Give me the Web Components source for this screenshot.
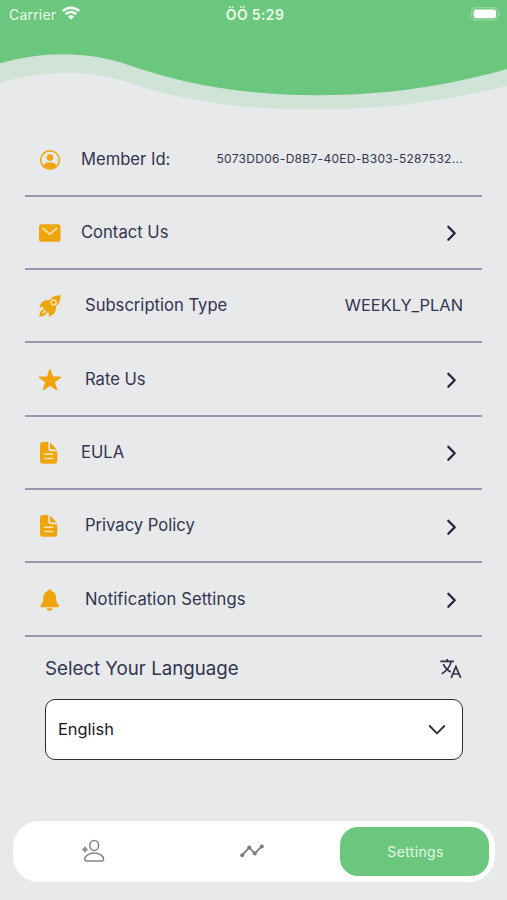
<!DOCTYPE html>
<html lang="en">
<head>
<meta charset="utf-8">
<title>Settings</title>
<style>
html,body{margin:0;height:100%}
body{background:#e7e9eb;font-family:Inter,"Liberation Sans",sans-serif;color:#34344e;overflow:hidden}
</style>
</head>
<body>
<settings-screen></settings-screen>
<script>
const icons = {
  user: `<svg width="22" height="22" viewBox="0 0 22 22"><circle cx="11" cy="11" r="9.3" fill="none" stroke="#efa50b" stroke-width="1.5"/><circle cx="11" cy="8.6" r="3.3" fill="#efa50b"/><path d="M4.3 16.7c1.4-2.4 3.9-3.4 6.7-3.4s5.300 1 6.700 3.400A9 9 0 0 1 4.300 16.700Z" fill="#efa50b"/></svg>`,
  mail: `<svg width="22" height="22" viewBox="0 0 22 22"><rect x="0" y="2.200" width="21.500" height="17.600" rx="2.600" fill="#efa50b"/><path d="M3.800 6.300 10.800 12.100 17.800 6.300" fill="none" stroke="#f8e8c4" stroke-width="1.500" stroke-linecap="round" stroke-linejoin="round"/></svg>`,
  rocket: `<svg width="22" height="22" viewBox="0 0 22 22"><path d="M21.600.3C17 .2 13.400 1.600 10.600 5 7.400 4.800 4.800 5.400 3 7.300 1.800 8.600.8 10.500.3 12.300L4.400 11.900 4 13.400 8.500 17.900 10 17.600 9.600 21.700C11.500 21.200 13.400 20.200 14.600 19 16.600 17 17.100 14.600 17 11.300 20.400 8.500 21.700 5 21.600.3Z" fill="#efa50b"/><circle cx="14.600" cy="7.400" r="2.500" fill="#efa50b" stroke="#f4ead0" stroke-width="1.300"/><path d="M3.700 14.400C1.600 14.800.7 17.300.3 21.700 4.700 21.300 7.200 20.400 7.600 18.300L5.900 16.600C5.500 18.200 4.500 18.600 2.900 19.100 3.400 17.500 3.800 16.500 5.400 16.100Z" fill="#efa50b"/></svg>`,
  star: `<svg width="24" height="24" viewBox="0 0 24 24"><path d="M12 1.500 14.700 9.200H22.600L16.300 14 18.500 21.700 12 17.100 5.500 21.700 7.700 14 1.400 9.200H9.300Z" fill="#efa50b" stroke="#efa50b" stroke-width="1.200" stroke-linejoin="round"/></svg>`,
  doc: `<svg width="20" height="22" viewBox="0 0 20 22"><path d="M3 0H8.300V6.200A3 3 0 0 0 11.300 9.200H17.300V18.700A3 3 0 0 1 14.300 21.700H3A3 3 0 0 1 0 18.700V3A3 3 0 0 1 3 0ZM10 .5 16.900 7.500H11.500A1.500 1.500 0 0 1 10 6Z" fill="#efa50b"/><path d="M4.800 12.300H12.800M4.800 16.500H12.800" stroke="#f9e6bd" stroke-width="1.500" stroke-linecap="round"/></svg>`,
  bell: `<svg width="20" height="22" viewBox="0 0 20 22"><path d="M9.700.3C8.800.3 8.400.9 8.200 1.700 5 2.500 3.300 5 3.300 8.600 3.300 13 2.400 14.200.8 15.900-.1 17.100.4 18.200 1.800 18.200H17.600C19 18.200 19.500 17.100 18.600 15.900 17 14.200 16.100 13 16.100 8.600 16.100 5 14.400 2.500 11.200 1.700 11 .9 10.600.3 9.700.3ZM6.600 19.200H12.800C12.300 20.900 11.200 21.700 9.700 21.700S7.100 20.900 6.600 19.200Z" fill="#efa50b"/></svg>`,
  chevron: `<svg width="12" height="18" viewBox="0 0 12 18"><path d="M2.300 2.700 8.700 9.200 2.300 15.700" fill="none" stroke="#24223c" stroke-width="2.300" stroke-linecap="round" stroke-linejoin="round"/></svg>`
};

function define(name, render) {
  customElements.define(name, class extends HTMLElement {
    constructor() { super(); this.attachShadow({mode: "open"}); }
    connectedCallback() { this.shadowRoot.innerHTML = render(this); }
  });
}

define("status-bar", () => `<style>
:host{display:grid;grid-template-columns:1fr auto 1fr;align-items:center;height:28px;padding:0 6px 0 9px;color:#e9fbe9;font-size:14px;box-sizing:border-box}
.left{display:flex;align-items:center;gap:6px;letter-spacing:.2px}
.time{font-weight:600;letter-spacing:.35px}
.right{justify-self:end;display:flex}
svg{display:block}
.left svg{margin-top:-3px}
.right svg{margin-top:-1px}
</style>
<div class="left"><span>Carrier</span><svg width="18" height="14" viewBox="0 0 18 14"><g fill="none" stroke="#f4fff4" stroke-width="2.500"><path d="M.9 5.200A11.500 11.500 0 0 1 17.100 5.200"/><path d="M3.700 8.200A7.500 7.500 0 0 1 14.300 8.200"/></g><path d="M9 13.800 5.900 10.600A4.500 4.500 0 0 1 12.100 10.600Z" fill="#f4fff4"/></svg></div>
<div class="time">ÖÖ 5:29</div>
<div class="right"><svg width="30" height="14" viewBox="0 0 30 14"><rect x=".8" y=".8" width="25.800" height="12.200" rx="3.800" fill="none" stroke="#a0dba9" stroke-width="1.100"/><rect x="2.600" y="2.500" width="22.400" height="8.800" rx="2.200" fill="#fff"/><path d="M27.900 5A2.200 2.200 0 0 1 27.900 8.800Z" fill="#a0dba9"/></svg></div>`);

define("wave-header", () => `<style>
:host{display:grid;height:123.400px;align-items:start}
svg,slot{grid-area:1/1}
svg,slot{display:block}
</style>
<svg width="507" height="122" viewBox="0 0 507 122"><path d="M0 0V83C45 70 88 69 130 83 180 100 240 109.500 310 109.500 390 109.500 450 100 507 86V0Z" fill="#cfe3d6"/><path d="M0 0V63.300C45 51 88 51 130 65.500 180 83 240 95.200 318 95.200 390 95.200 450 85 507 69V0Z" fill="#6bc77e"/></svg>
<slot></slot>`);

define("setting-row", el => `<style>
:host{display:flex;align-items:center;box-sizing:border-box;height:73.330px;margin:0 25px;padding:0 19px 1px 12px;border-bottom:2px solid #9696b0;font-size:16.600px}
.icon{width:26px;height:26px;display:flex;align-items:center;justify-content:center;flex:none;margin-top:2px}
.label{margin-left:${el.hasAttribute("wide") ? 22 : 18}px;flex:1;white-space:nowrap}
.end{display:flex;align-items:center;white-space:nowrap}
svg{display:block}
.go{margin-right:5px;margin-top:3px}
</style>
<span class="icon">${icons[el.getAttribute("icon")]}</span>
<span class="label"><slot></slot></span>
<span class="end">${el.hasAttribute("link") ? `<span class="go">${icons.chevron}</span>` : `<slot name="value"></slot>`}</span>`);

define("language-select", () => `<style>
:host{display:block;margin:0 44px 0 45px}
.head{display:flex;align-items:center;justify-content:space-between;height:62.300px;font-size:18.700px;padding-top:1px;box-sizing:border-box}
.box{display:flex;align-items:center;justify-content:space-between;box-sizing:border-box;height:61px;border:1.500px solid #2e2e32;border-radius:10px;background:#fff;padding:0 16px 0 12px;color:#17171a;font-size:16.400px}
svg{display:block;margin-top:1px}
</style>
<div class="head"><span><slot name="label"></slot></span><svg width="23" height="22" viewBox="0 0 23 22" fill="none" stroke="#33334c" stroke-width="1.700"><path d="M.4 3.400H14M7.200 1V3.400M11.200 3.600C10 8.600 6.500 12.800 1.700 15.900M3.400 6.200C4.700 9.300 7.400 12.400 10.800 14.100M11.200 19.800 15.900 8.700 20.700 19.800M12.800 16H19"/></svg></div>
<div class="box"><slot></slot><svg width="18" height="12" viewBox="0 0 18 12"><path d="M1.700 2 9 9.300 16.300 2" fill="none" stroke="#2a2a2e" stroke-width="1.800" stroke-linecap="round" stroke-linejoin="round"/></svg></div>`);

define("tab-bar", () => `<style>
:host{display:flex;box-sizing:border-box;width:482px;height:61px;margin:61px 0 0 13px;padding:6px 6px 6px 0;background:#fff;border-radius:26px;align-items:center}
.tab{flex:1;display:flex;justify-content:center}
.active{flex:none;margin-left:8px;width:149px;height:49px;border-radius:18px;background:#6bc77e;display:flex;align-items:center;justify-content:center;color:#e6f9e8;font-size:14px;letter-spacing:.35px;padding-left:2px;box-sizing:border-box}
svg{display:block}
</style>
<span class="tab"><svg width="24" height="24" viewBox="0 0 24 24" fill="none" stroke="#858585" stroke-width="1.500"><ellipse cx="13.200" cy="6.400" rx="4.400" ry="5"/><path d="M3.800 20.300C3.800 16.500 8 14.100 13.200 14.100S22.600 16.500 22.600 20.300C22.600 21.500 22.100 22 21.200 22H5.200C4.300 22 3.800 21.500 3.800 20.300Z"/><path d="M1.200 10.500H6.600M3.900 7.800V13.200" stroke-width="1.800"/></svg></span>
<span class="tab"><svg width="24" height="16" viewBox="0 0 24 16"><path d="M2.200 12.200 9.200 4.600 14.800 10.400 21.800 3.400" fill="none" stroke="#7b7b7b" stroke-width="1.700"/><g fill="#7b7b7b"><circle cx="2.200" cy="12.200" r="2"/><circle cx="9.200" cy="4.600" r="2"/><circle cx="14.800" cy="10.400" r="2"/><circle cx="21.800" cy="3.400" r="2"/></g></svg></span>
<span class="active"><slot></slot></span>`);

define("settings-screen", () => `<style>
:host{display:flex;flex-direction:column;width:507px;height:900px}
.id{font-size:12px;letter-spacing:.3px}
.plan{font-size:16.400px}
.spaced{letter-spacing:.1px}
</style>
<wave-header><status-bar></status-bar></wave-header>
<setting-row icon="user">Member Id:<span slot="value" class="id">5073DD06-D8B7-40ED-B303-5287532...</span></setting-row>
<setting-row icon="mail" link>Contact Us</setting-row>
<setting-row icon="rocket" wide>Subscription Type<span slot="value" class="plan">WEEKLY_PLAN</span></setting-row>
<setting-row icon="star" wide link>Rate Us</setting-row>
<setting-row icon="doc" link>EULA</setting-row>
<setting-row icon="doc" wide link>Privacy Policy</setting-row>
<setting-row icon="bell" wide link class="spaced">Notification Settings</setting-row>
<language-select><span slot="label">Select Your Language</span>English</language-select>
<tab-bar>Settings</tab-bar>`);
</script>
</body>
</html>
